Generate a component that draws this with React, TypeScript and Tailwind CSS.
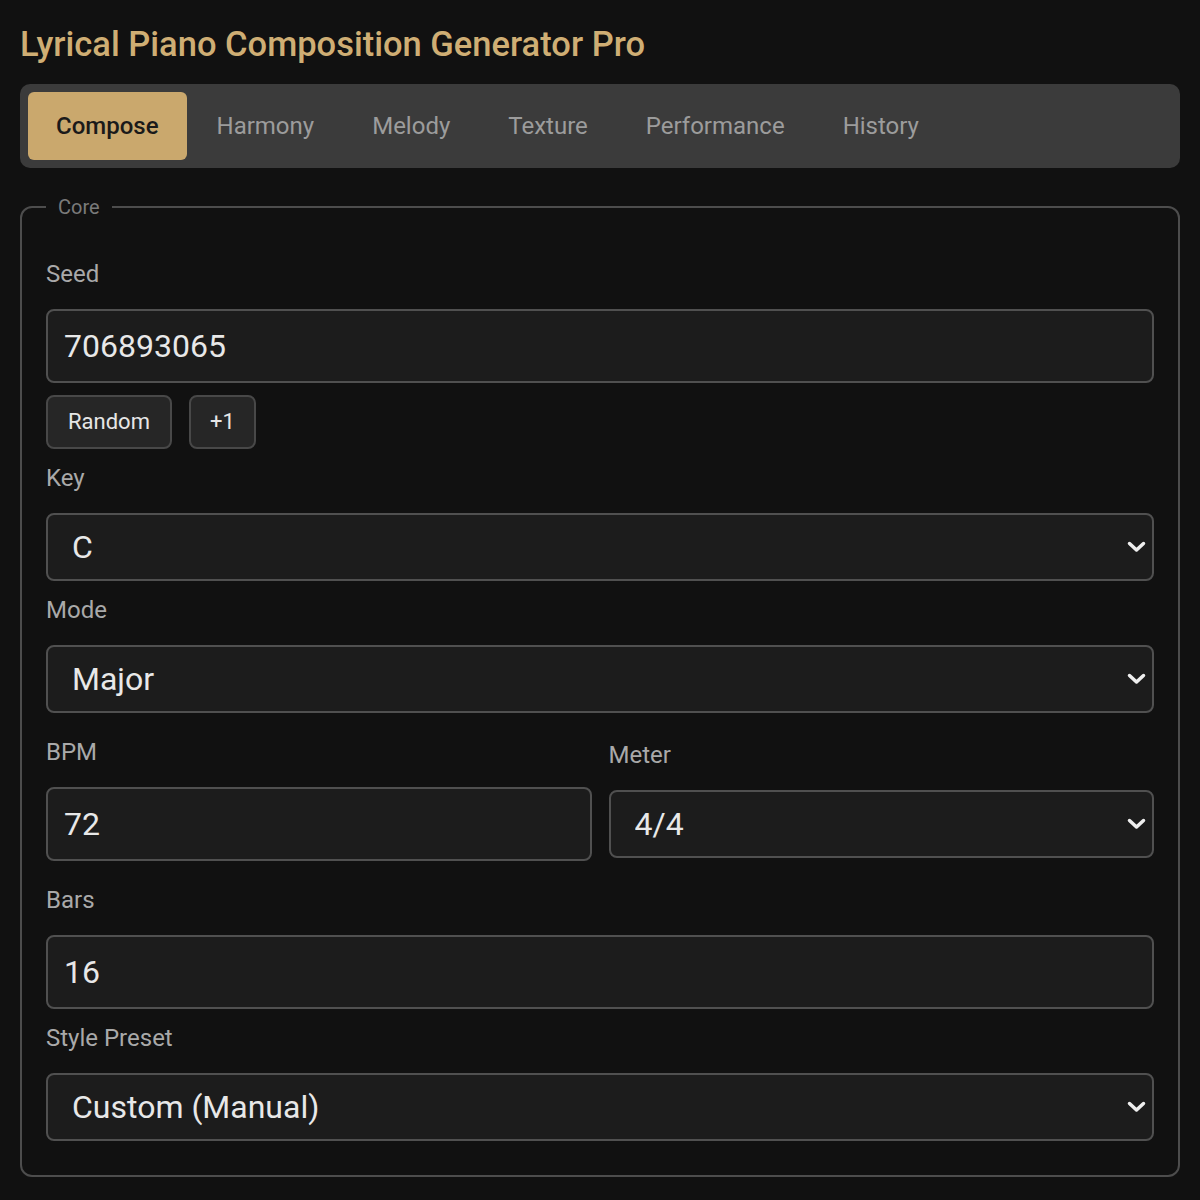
import React, { useState } from 'react';

const tabs = ['Compose', 'Harmony', 'Melody', 'Texture', 'Performance', 'History'];

const Label: React.FC<{ children: React.ReactNode }> = ({ children }) => (
  <label className="block text-[24px] leading-[26px] text-[#a9a9a9] mb-[22px]">{children}</label>
);

const inputCls =
  'w-full h-[74px] px-4 bg-[#1c1c1c] border-2 border-[#505050] rounded-lg text-[32px] text-[#e8e8e8] outline-none';

const Select: React.FC<{ value: string; options: string[]; onChange: (v: string) => void }> = ({
  value,
  options,
  onChange,
}) => (
  <div className="relative">
    <select
      value={value}
      onChange={(e) => onChange(e.target.value)}
      className="w-full h-[68px] pl-6 pr-12 appearance-none bg-[#1c1c1c] border-2 border-[#505050] rounded-lg text-[32px] text-[#e8e8e8] outline-none"
    >
      {options.map((o) => (
        <option key={o} value={o}>
          {o}
        </option>
      ))}
    </select>
    {/* dropdown chevron */}
    <svg
      className="absolute right-[8px] top-1/2 -translate-y-1/2 pointer-events-none"
      width="19"
      height="12"
      viewBox="0 0 19 12"
      fill="none"
    >
      <path d="M2.5 2.5 L9.5 9 L16.5 2.5" stroke="#eeeeee" strokeWidth="3.5" strokeLinecap="round" strokeLinejoin="round" />
    </svg>
  </div>
);

const App: React.FC = () => {
  const [tab, setTab] = useState('Compose');
  const [seed, setSeed] = useState('706893065');
  const [key, setKey] = useState('C');
  const [mode, setMode] = useState('Major');
  const [bpm, setBpm] = useState('72');
  const [meter, setMeter] = useState('4/4');
  const [bars, setBars] = useState('16');
  const [preset, setPreset] = useState('Custom (Manual)');

  return (
    <div className="min-h-screen bg-[#111111] px-5 pt-[23px] pb-6 font-[Roboto,sans-serif]">
      <h1 className="text-[34.5px] leading-[42px] font-medium text-[#cfae74]">Lyrical Piano Composition Generator Pro</h1>

      {/* Tabs */}
      <div className="mt-[19px] flex gap-0.5 p-2 bg-[#3b3b3b] rounded-[10px]">
        {tabs.map((t) => (
          <button
            key={t}
            onClick={() => setTab(t)}
            className={
              t === tab
                ? 'px-7 py-5 text-[24px] leading-[28px] rounded-md bg-[#caa86d] text-[#1a1a1a] font-medium'
                : 'px-7 py-5 text-[24px] leading-[28px] rounded-md text-[#9c9c9c]'
            }
          >
            {t}
          </button>
        ))}
      </div>

      {/* Core settings */}
      <fieldset className="mt-[27px] border-2 border-[#4d4d4d] rounded-xl px-6 pt-[42px] pb-[34px]">
        <legend className="ml-0 px-3 text-[20px] leading-[24px] text-[#7a7a7a]">Core</legend>

        <Label>Seed</Label>
        <input className={inputCls} value={seed} onChange={(e) => setSeed(e.target.value)} />
        <div className="mt-3 flex gap-[17px]">
          <button
            onClick={() => setSeed(String(Math.floor(Math.random() * 1e9)))}
            className="px-5 py-3 text-[22px] leading-[26px] text-[#e6e6e6] bg-[#262626] border-2 border-[#484848] rounded-lg"
          >
            Random
          </button>
          <button
            onClick={() => setSeed(String(Number(seed) + 1))}
            className="px-[19px] py-3 text-[22px] leading-[26px] text-[#e6e6e6] bg-[#262626] border-2 border-[#484848] rounded-lg"
          >
            +1
          </button>
        </div>

        <div className="mt-4">
          <Label>Key</Label>
          <Select value={key} onChange={setKey} options={['C', 'C#', 'D', 'Eb', 'E', 'F', 'F#', 'G', 'Ab', 'A', 'Bb', 'B']} />
        </div>

        <div className="mt-4">
          <Label>Mode</Label>
          <Select value={mode} onChange={setMode} options={['Major', 'Minor', 'Dorian', 'Lydian', 'Mixolydian']} />
        </div>

        <div className="mt-[26px] grid grid-cols-2 gap-[17px] items-center">
          <div>
            <Label>BPM</Label>
            <input className={inputCls} value={bpm} onChange={(e) => setBpm(e.target.value)} />
          </div>
          <div>
            <Label>Meter</Label>
            <Select value={meter} onChange={setMeter} options={['4/4', '3/4', '6/8', '2/4']} />
          </div>
        </div>

        <div className="mt-[26px]">
          <Label>Bars</Label>
          <input className={inputCls} value={bars} onChange={(e) => setBars(e.target.value)} />
        </div>

        <div className="mt-4">
          <Label>Style Preset</Label>
          <Select
            value={preset}
            onChange={setPreset}
            options={['Custom (Manual)', 'Nocturne', 'Ballad', 'Film Score', 'Hymn']}
          />
        </div>
      </fieldset>
    </div>
  );
};

export default App;
